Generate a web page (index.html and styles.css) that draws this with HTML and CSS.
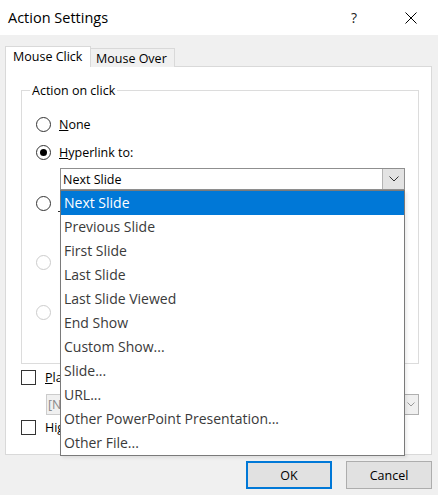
FILE: index.html
```html
<!DOCTYPE html>
<html lang="en">
<head>
  <meta charset="UTF-8">
  <title>Action Settings</title>
  <link rel="stylesheet" href="styles.css">
</head>
<body>
  <div class="dialog">
    <div class="titlebar">
      <span class="title">Action Settings</span>
      <span class="help">?</span>
      <span class="close">
        <svg width="12" height="12" viewBox="0 0 12 12"><path d="M0.5 0.5 L11.5 11.5 M11.5 0.5 L0.5 11.5" stroke="#000" stroke-width="1" fill="none"/></svg>
      </span>
    </div>

    <div class="content">
      <div class="tabs">
        <div class="tab active">Mouse Click</div>
        <div class="tab">Mouse Over</div>
      </div>

      <div class="panel">
        <div class="group">
          <span class="legend">Action on click</span>

          <div class="row">
            <span class="radio"></span>
            <span class="label"><u>N</u>one</span>
          </div>
          <div class="row">
            <span class="radio checked"></span>
            <span class="label"><u>H</u>yperlink to:</span>
          </div>

          <div class="combo">
            <span class="combo-text">Next Slide</span>
            <span class="combo-btn">
              <svg width="10" height="6" viewBox="0 0 10 6"><path d="M0.5 0.5 L5 5 L9.5 0.5" stroke="#333" stroke-width="1" fill="none"/></svg>
            </span>
            <ul class="droplist">
              <li class="selected">Next Slide</li>
              <li>Previous Slide</li>
              <li>First Slide</li>
              <li>Last Slide</li>
              <li>Last Slide Viewed</li>
              <li>End Show</li>
              <li>Custom Show...</li>
              <li>Slide...</li>
              <li>URL...</li>
              <li>Other PowerPoint Presentation...</li>
              <li>Other File...</li>
            </ul>
          </div>

          <div class="row row-short">
            <span class="radio"></span>
            <span class="accel-mark"></span>
          </div>
          <div class="row row-short row-macro">
            <span class="radio disabled"></span>
          </div>
          <div class="row row-short row-object">
            <span class="radio disabled"></span>
          </div>
        </div>

        <div class="check-row">
          <span class="checkbox"></span>
          <span class="label"><u>P</u>la</span>
        </div>
        <div class="sound-select">
          <span class="sound-text">[N</span>
          <span class="sound-btn">
            <svg width="8" height="5" viewBox="0 0 8 5"><path d="M0.5 0.5 L4 4 L7.5 0.5" stroke="#999" stroke-width="1" fill="none"/></svg>
          </span>
        </div>
        <div class="check-row check-row-last">
          <span class="checkbox"></span>
          <span class="label">Hig</span>
        </div>
      </div>

      <div class="buttons">
        <button class="btn default">OK</button>
        <button class="btn">Cancel</button>
      </div>
    </div>
  </div>
</body>
</html>
```

FILE: styles.css
```css
* {
  box-sizing: border-box;
}
body {
  margin: 0;
  font-family: "Segoe UI", "Open Sans", sans-serif;
  font-size: 12.5px;
  color: #000;
  background: #f0f0f0;
}
.dialog {
  width: 438px;
  height: 495px;
  background: #f0f0f0;
  display: flex;
  flex-direction: column;
}
.titlebar {
  height: 35px;
  background: #fff;
  display: flex;
  align-items: center;
  padding-left: 8px;
}
.title {
  flex: 1;
  font-size: 14.5px;
}
.help {
  width: 20px;
  text-align: center;
  font-size: 14px;
  color: #222;
}
.close {
  width: 20px;
  margin-left: 37px;
  margin-right: 17px;
  display: flex;
  justify-content: center;
}
.content {
  padding: 11px 6px 0 5px;
}
.tabs {
  display: flex;
  align-items: flex-end;
  height: 21px;
  margin-bottom: -1px;
  position: relative;
  z-index: 1;
}
.tab {
  height: 19px;
  padding: 1px 5px 0 5px;
  border: 1px solid #d9d9d9;
  border-bottom: none;
  border-left: none;
  background: #f0f0f0;
  width: 84px;
  line-height: 17px;
}
.tab.active {
  height: 21px;
  width: 86px;
  padding: 0 0 0 7px;
  border-left: 1px solid #d9d9d9;
  background: #fff;
  line-height: 20px;
}
.panel {
  height: 389px;
  background: #fff;
  border: 1px solid #d9d9d9;
  padding: 0 12px 0 15px;
}
.group {
  position: relative;
  margin-top: 23px;
  height: 274px;
  border: 1px solid #dcdcdc;
  padding-top: 19px;
}
.legend {
  position: absolute;
  top: -9px;
  left: 8px;
  padding: 0 2px;
  background: #fff;
  line-height: 18px;
}
.row {
  display: flex;
  align-items: center;
  height: 28px;
  margin-left: 14px;
}
.row-short {
  height: 26px;
}
.row-macro {
  margin-top: 33px;
}
.row-object {
  margin-top: 24px;
}
.radio {
  width: 15px;
  height: 15px;
  border: 1px solid #333;
  border-radius: 50%;
  position: relative;
  flex: none;
}
.radio.checked::after {
  content: "";
  position: absolute;
  left: 3px;
  top: 3px;
  width: 7px;
  height: 7px;
  border-radius: 50%;
  background: #000;
}
.radio.disabled {
  border-color: #cccccc;
}
.accel-mark {
  width: 2px;
  height: 1px;
  margin: 16px 0 0 7px;
  background: #333;
}
.label {
  margin-left: 8px;
  white-space: nowrap;
}
.combo {
  position: relative;
  margin: 2px 0 0 38px;
  width: 345px;
  height: 22px;
  border: 1px solid #8f8f8f;
  display: flex;
  align-items: center;
  z-index: 2;
}
.combo-text {
  flex: 1;
  padding-left: 2px;
}
.combo-btn {
  width: 22px;
  height: 20px;
  background: #e3e3e3;
  border-left: 1px solid #b4b4b4;
  display: flex;
  align-items: center;
  justify-content: center;
}
.droplist {
  position: absolute;
  top: calc(100% + 1px);
  left: -1px;
  width: 345px;
  margin: 0;
  padding: 0;
  list-style: none;
  background: #fff;
  border: 1px solid #7a7a7a;
  font-size: 14px;
  color: #3a3a3a;
  box-shadow: 2px 2px 3px rgba(0, 0, 0, 0.08);
}
.droplist li {
  height: 24px;
  line-height: 24px;
  padding-left: 3px;
}
.droplist li.selected {
  background: #0078d7;
  color: #fff;
}
.check-row {
  display: flex;
  align-items: center;
  height: 17px;
  margin-top: 5px;
}
.check-row-last {
  margin-top: 4px;
}
.checkbox {
  width: 15px;
  height: 15px;
  border: 1px solid #333;
  background: #fff;
  flex: none;
}
.check-row .label {
  margin-left: 9px;
}
.sound-select {
  margin: 8px 0 0 25px;
  width: 373px;
  height: 21px;
  border: 1px solid #cccccc;
  background: #f0f0f0;
  color: #8a8a8a;
  display: flex;
  align-items: center;
  justify-content: space-between;
}
.sound-text {
  padding-left: 1px;
}
.sound-btn {
  width: 16px;
  height: 21px;
  margin-right: -1px;
  border: 1px solid #b0b0b0;
  display: flex;
  align-items: center;
  justify-content: center;
}
.buttons {
  display: flex;
  justify-content: flex-end;
  gap: 14px;
  margin-top: 6px;
}
.btn {
  width: 86px;
  height: 28px;
  font-family: inherit;
  font-size: 12.5px;
  background: #e1e1e1;
  border: 1px solid #adadad;
  color: #000;
  padding: 0;
}
.btn.default {
  border-color: #0078d7;
  box-shadow: inset 0 0 0 1px #0078d7;
}
```
